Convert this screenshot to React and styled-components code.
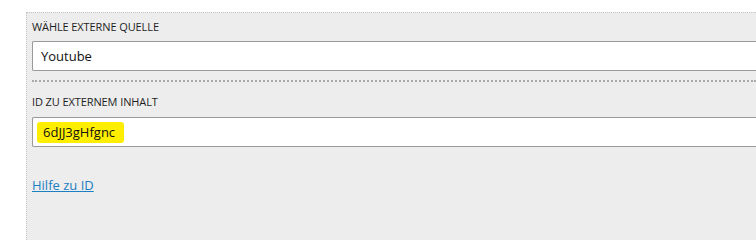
import React from "react";
import styled, { createGlobalStyle } from "styled-components";

const GlobalStyle = createGlobalStyle`
  html, body {
    margin: 0;
    background: #ffffff;
    font-family: "Open Sans", "Noto Sans", sans-serif;
  }
`;

const Page = styled.div`
  min-height: 100vh;
  display: flex;
  padding: 12px 0 0 26px;
  box-sizing: border-box;
  overflow: hidden;
`;

const Panel = styled.div`
  flex: 1;
  background: #ededed;
  border-top: 1px dotted #c4c4c4;
  border-left: 1px dotted #c4c4c4;
  padding: 0 0 0 5px;
  box-sizing: border-box;
`;

const Field = styled.div`
  display: flex;
  flex-direction: column;
  padding: ${(p) => (p.first ? "6px 0 9px" : "12px 0 0")};
  border-bottom: ${(p) => (p.first ? "2px dotted #a9a9a9" : "none")};
`;

const Label = styled.label`
  font-size: 11px;
  line-height: 16px;
  color: #1e1e1e;
  text-transform: uppercase;
  letter-spacing: -0.1px;
  margin-bottom: ${(p) => (p.wide ? "7px" : "6px")};
`;

const Input = styled.div`
  height: 30px;
  box-sizing: border-box;
  background: #ffffff;
  border: 1px solid #9a9a9a;
  border-right: none;
  border-radius: 2px 0 0 2px;
  display: flex;
  align-items: center;
  padding-left: ${(p) => (p.highlighted ? "4px" : "8px")};
  font-size: 13px;
  color: #111;
`;

const Marker = styled.span`
  background: #ffee00;
  border-radius: 3px;
  padding: 1px 9px 1px 6px;
  line-height: 19px;
`;

const HelpLink = styled.a`
  display: inline-block;
  margin-top: 29px;
  font-size: 13px;
  color: #1b7fc4;
  text-decoration: underline;
`;

export default function App() {
  return (
    <>
      <GlobalStyle />
      <Page>
        <Panel>
          <Field first>
            <Label>Wähle externe Quelle</Label>
            <Input>Youtube</Input>
          </Field>
          <Field>
            <Label wide>ID zu externem Inhalt</Label>
            <Input highlighted>
              <Marker>6dJJ3gHfgnc</Marker>
            </Input>
          </Field>
          <HelpLink href="#">Hilfe zu ID</HelpLink>
        </Panel>
      </Page>
    </>
  );
}
